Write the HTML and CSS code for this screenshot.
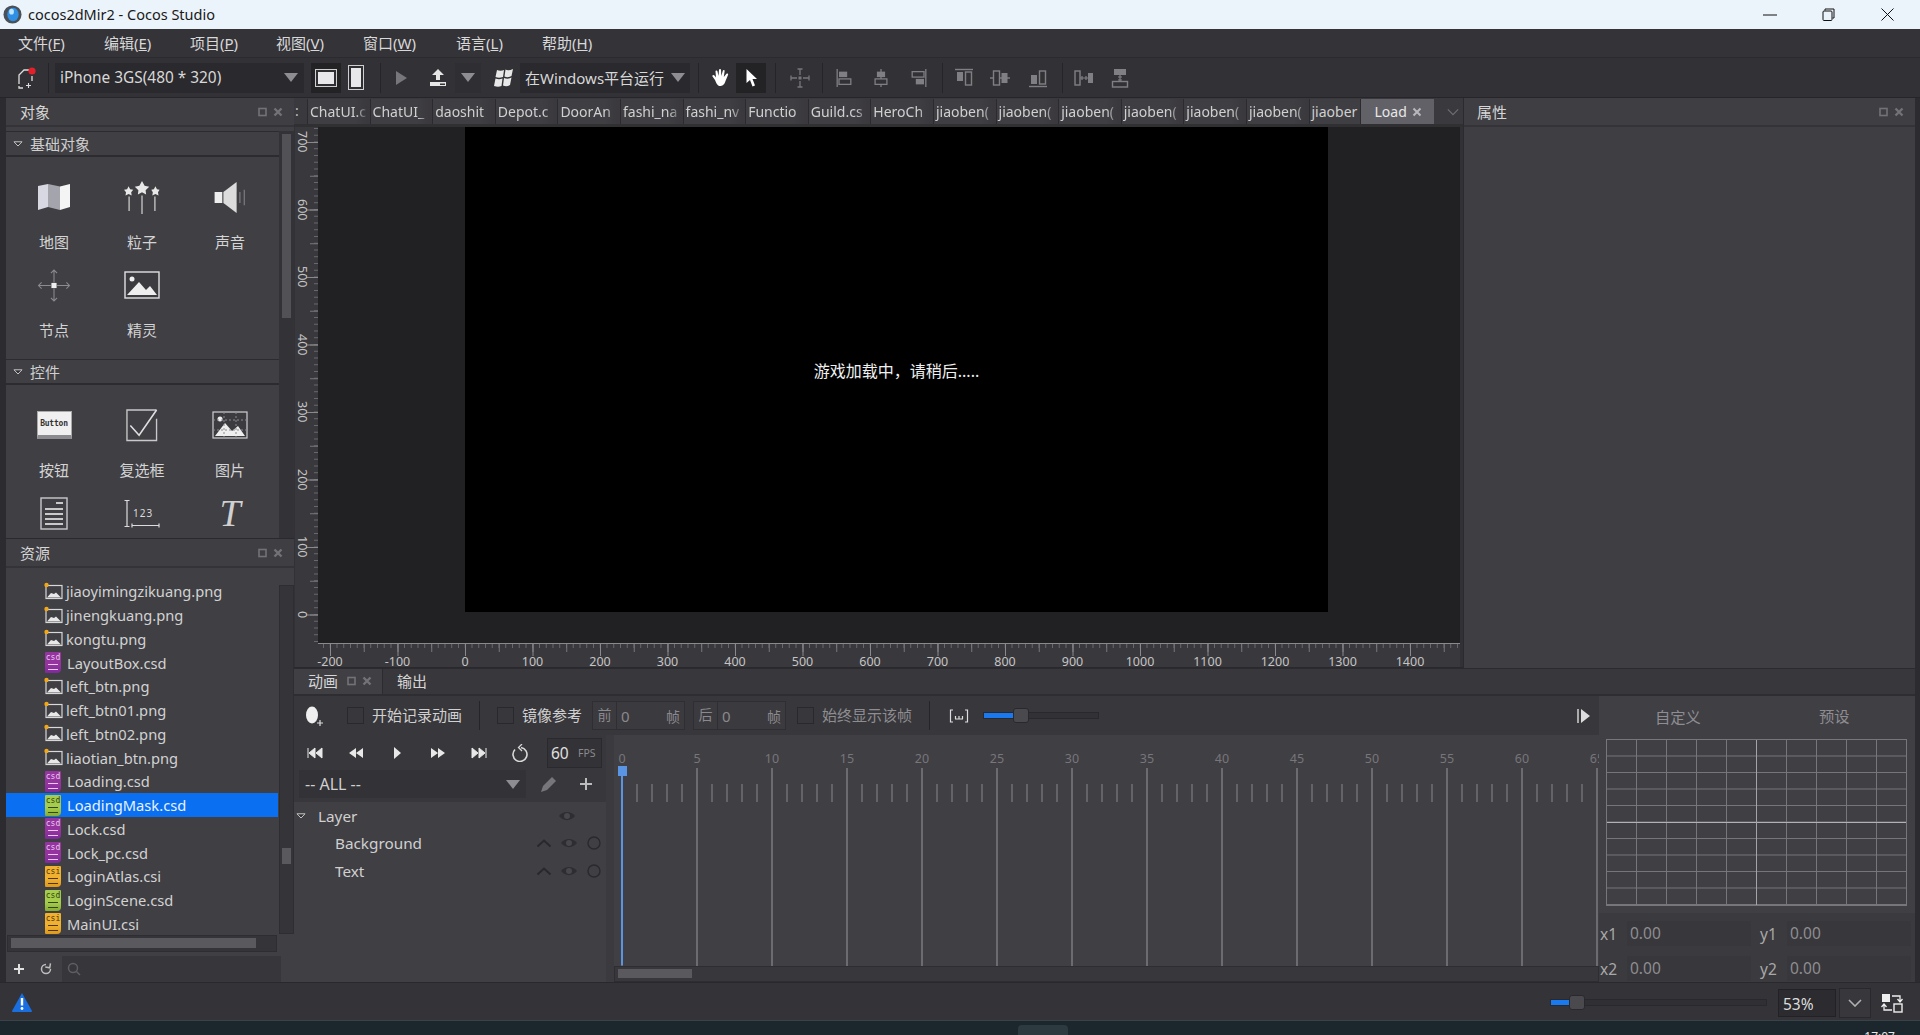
FILE: index.html
```html
<!DOCTYPE html>
<html lang="zh-CN">
<head>
<meta charset="utf-8">
<title>cocos2dMir2 - Cocos Studio</title>
<link rel="stylesheet" href="styles.css">
</head>
<body>
<svg class="defs" aria-hidden="true">
  <symbol id="png" viewBox="0 0 19 19">
    <rect x="2" y="3.5" width="16" height="13" fill="none" stroke="#d8d8d8" stroke-width="1.2"/>
    <path d="M3 15.5 L7 11 L10 12 L12 10.5 L17 15.5Z" fill="#e8e8e8"/>
    <circle cx="2.5" cy="3" r="2.2" fill="#f0a818"/>
  </symbol>
  <symbol id="pinmax" viewBox="0 0 10 10"><rect x="1" y="1.5" width="7" height="7" fill="none" stroke="#737276" stroke-width="1.6"/></symbol>
  <symbol id="pinx" viewBox="0 0 10 10"><path d="M1.5 1.5 L8.5 8.5 M8.5 1.5 L1.5 8.5" stroke="#737276" stroke-width="2.4"/></symbol>
  <symbol id="tri" viewBox="0 0 10 6"><path d="M1 .8 H9 L5 5Z" fill="#2f2e32" stroke="#c8c8c8" stroke-width="1"/></symbol>
  <symbol id="eye" viewBox="0 0 18 12"><path d="M1 6 C5 .5 13 .5 17 6 C13 11.5 5 11.5 1 6Z" fill="#2e2d31"/><circle cx="9" cy="6" r="3" fill="#48474b"/></symbol>
  <symbol id="up" viewBox="0 0 16 10"><path d="M1.5 8.5 L8 2.5 L14.5 8.5" fill="none" stroke="#29282c" stroke-width="2"/></symbol>
  <symbol id="ring" viewBox="0 0 14 14"><circle cx="7" cy="7" r="6" fill="none" stroke="#2a292d" stroke-width="1.4"/></symbol>
</svg>

<div class="app">
  <header class="titlebar">
    <svg class="appicon" viewBox="0 0 20 20"><circle cx="10" cy="10" r="9.500" fill="#4a5058"/><ellipse cx="10.500" cy="10" rx="6" ry="7" fill="#2f8fe4"/><ellipse cx="9" cy="7" rx="2.500" ry="3" fill="#bfe4fb"/></svg>
    <span class="apptitle">cocos2dMir2 - Cocos Studio</span>
    <div class="winctl">
      <svg class="wc-min" viewBox="0 0 14 2"><path d="M0 1H14" stroke="#111" stroke-width="1"/></svg>
      <svg class="wc-res" viewBox="0 0 13 13"><path d="M3 2.5 V1 H12 V10 H10.5" fill="none" stroke="#111"/><rect x="1" y="3" width="9" height="9.5" rx="1" fill="none" stroke="#111"/></svg>
      <svg class="wc-cls" viewBox="0 0 13 13"><path d="M.5 .5 L12.5 12.5 M12.5 .5 L.5 12.5" stroke="#111"/></svg>
    </div>
  </header>

  <nav class="menubar">
    <span class="menu">文件(<u>F</u>)</span>
    <span class="menu">编辑(<u>E</u>)</span>
    <span class="menu">项目(<u>P</u>)</span>
    <span class="menu">视图(<u>V</u>)</span>
    <span class="menu menu-w">窗口(<u>W</u>)</span>
    <span class="menu">语言(<u>L</u>)</span>
    <span class="menu">帮助(<u>H</u>)</span>
  </nav>

  <div class="toolbar">
    <span class="tb ml-12"><svg class="newdoc" viewBox="0 0 18 22"><path d="M11 3 H6 L1 8 V17 M1 19 V21 H5 M14 9 V14" fill="none" stroke="#ddd" stroke-width="1.300"/><path d="M8 18.500 H13 M10.500 16 V21" stroke="#ddd" stroke-width="1.100"/><circle cx="14" cy="4" r="3.600" fill="#e2202c"/></svg></span>
    <span class="sep ml-6"></span>
    <div class="combo combo-device ml-6"><span class="combo-text">iPhone 3GS(480 * 320)</span><span class="arrow"></span></div>
    <span class="tb active ml-7"><span class="screen-land"></span></span>
    <span class="tb"><span class="screen-port"></span></span>
    <span class="sep ml-9"></span>
    <span class="tb ml-5"><svg class="i20" viewBox="0 0 20 20"><path d="M5 3 L16 10 L5 17Z" fill="#77767a"/></svg></span>
    <span class="tb ml-7"><svg class="i20" viewBox="0 0 20 20"><path d="M10 1 L16 7 H12 V12 H8 V7 H4Z M2 14 H18 V18 H2Z" fill="#e6e6e6"/><rect x="12" y="15.5" width="5" height="1.5" fill="#333"/></svg></span>
    <span class="tb tb-arrow ml-2"><span class="arrow"></span></span>
    <svg class="winlogo ml-12" viewBox="0 0 22 22"><path d="M4 3 C6 4 9 4 11 3 L10 10 C7 11 5 11 2.500 10Z M12.500 2.500 C14 3.500 17 3.500 20 2 L18.500 9 C16 10.500 13.500 10.500 11.500 9.500Z M2.500 11.500 C5 12.500 7 12.500 9.500 11.500 L8.500 19 C6 20 4 20 1 19Z M11 11 C13.500 12 16 12 18.500 10.500 L17 18 C14.500 19.500 12.500 19.500 10 18.500Z" fill="#e8e8e8"/></svg>
    <div class="combo combo-run ml-5"><span class="combo-text">在Windows平台运行</span><span class="arrow"></span></div>
    <span class="sep ml-8"></span>
    <span class="tb ml-7"><svg class="i20" viewBox="0 0 20 20"><path d="M4 12 L1.500 8.500 C1 7 2.500 6.500 3.500 7.500 L5 9.500 L4.500 3.500 C4.500 2.200 6.300 2.200 6.500 3.500 L7.500 8 L8 1.800 C8.200 .6 10 .6 10 1.800 L10.300 8 L11.800 2.800 C12.200 1.600 13.900 2 13.600 3.300 L12.800 9 L15.500 5.800 C16.500 5 17.600 5.900 17 7 L14.500 13 C13.500 17 11 18 9 18 C6.500 18 5.500 15.500 4 12Z" fill="#fff"/></svg></span>
    <span class="tb active"><svg class="i20" viewBox="0 0 20 20"><path d="M5.500 1 L16 11 H11.500 L14 17.500 L11.500 18.500 L9 12 L5.500 15Z" fill="#fff"/></svg></span>
    <span class="sep ml-9"></span>
    <span class="tb ml-9"><svg class="i20" viewBox="0 0 20 20"><g fill="none" stroke="#77767a" stroke-width="1.300"><path d="M10 1 V7 M7.500 1 H12.500 M10 13 V19 M7.500 19 H12.500 M1 10 H7 M1 7.500 V12.500 M13 10 H19 M19 7.500 V12.500"/></g><rect x="8.500" y="8.500" width="3" height="3" fill="#77767a"/></svg></span>
    <span class="sep ml-7"></span>
    <span class="tb ml-6"><svg class="i20" viewBox="0 0 18 22"><path d="M1.500 1 V21" stroke="#808084" stroke-width="1.400"/><rect x="3.500" y="4" width="9" height="6" fill="#808084"/><rect x="3.500" y="12" width="13" height="6" fill="none" stroke="#808084" stroke-width="1.400"/></svg></span>
    <span class="tb ml-7"><svg class="i20" viewBox="0 0 18 22"><path d="M9 1 V21" stroke="#808084" stroke-width="1.400"/><rect x="4.500" y="4" width="9" height="6" fill="#808084"/><rect x="2.500" y="12" width="13" height="6" fill="#323135" stroke="#808084" stroke-width="1.400"/></svg></span>
    <span class="tb ml-8"><svg class="i20" viewBox="0 0 18 22"><path d="M16.500 1 V21" stroke="#808084" stroke-width="1.400"/><rect x="1.500" y="4" width="13" height="6" fill="none" stroke="#808084" stroke-width="1.400"/><rect x="5.500" y="12" width="9" height="6" fill="#808084"/></svg></span>
    <span class="sep ml-8"></span>
    <span class="tb ml-6"><svg class="i20" viewBox="0 0 20 20"><path d="M1 1.500 H19" stroke="#808084" stroke-width="1.400"/><rect x="3" y="4" width="6" height="9" fill="#808084"/><rect x="11.500" y="4" width="6" height="13" fill="none" stroke="#808084" stroke-width="1.400"/></svg></span>
    <span class="tb ml-6"><svg class="i20" viewBox="0 0 20 20"><path d="M0 10 H20" stroke="#808084" stroke-width="1.400"/><rect x="3.500" y="3" width="6" height="14" fill="#323135" stroke="#808084" stroke-width="1.400"/><rect x="11.500" y="5" width="6" height="10" fill="#808084"/></svg></span>
    <span class="tb ml-8"><svg class="i20" viewBox="0 0 20 20"><path d="M1 18.500 H19" stroke="#808084" stroke-width="1.400"/><rect x="3" y="7" width="6" height="9" fill="#808084"/><rect x="11.500" y="3" width="6" height="13" fill="none" stroke="#808084" stroke-width="1.400"/></svg></span>
    <span class="sep ml-9"></span>
    <span class="tb ml-6"><svg class="i20" viewBox="0 0 20 20"><rect x="1" y="3" width="5" height="14" fill="none" stroke="#808084" stroke-width="1.400"/><path d="M6 10 H14 M8 8 V12 M12 8 V12" stroke="#808084" stroke-width="1.200"/><rect x="14" y="5" width="5" height="10" fill="#808084"/></svg></span>
    <span class="tb ml-6"><svg class="i20" viewBox="0 0 20 20"><rect x="4" y="1" width="12" height="6" fill="#808084"/><path d="M10 7 V13 M8 9 H12 M8 12 H12" stroke="#808084" stroke-width="1.200"/><rect x="2.500" y="13.500" width="15" height="5.500" fill="none" stroke="#808084" stroke-width="1.400"/></svg></span>
  </div>

  <main class="workspace">
    <aside class="leftcol">
      <section class="panel objects">
        <div class="phead"><span>对象</span><span class="pins"><svg><use href="#pinmax"/></svg><svg><use href="#pinx"/></svg></span></div>
        <div class="obj-body">
          <div class="obj-list">
            <div class="sec-head first"><svg class="tri"><use href="#tri"/></svg>基础对象</div>
            <div class="obj-grid">
              <div class="cell">
                <svg class="obj-ic" viewBox="0 0 34 28"><path d="M1 3 L11 1 V24 L1 27Z" fill="#d8d8e2"/><path d="M11 1 L23 3.500 V27 L11 24Z" fill="#a4a4ac"/><path d="M23 3.500 L33 1 V24 L23 27Z" fill="#f4f4f4"/></svg>
                <span>地图</span>
              </div>
              <div class="cell">
                <svg class="obj-ic tall" viewBox="0 0 34 32"><g fill="#e8e8e8"><path d="M17 0 L19.500 4.500 L24 5.500 L20.500 9 L21 13 L17 11 L13 13 L13.500 9 L10 5.500 L14.500 4.500Z"/><path d="M4 5 L5.500 8 L8.500 8.500 L6.500 10.800 L7 14 L4 12.500 L1 14 L1.500 10.800 L-.5 8.500 L2.500 8Z"/><path d="M30 5 L31.500 8 L34 8.500 L32.500 10.800 L33 14 L30 12.500 L27 14 L27.500 10.800 L26 8.500 L28.500 8Z"/></g><path d="M17 14 V32 M4.500 15 V29 M29.500 15 V29" stroke="#bbb" stroke-width="1.400"/></svg>
                <span>粒子</span>
              </div>
              <div class="cell">
                <svg class="obj-ic tall" viewBox="0 0 30 30"><rect x="1" y="10" width="7" height="10" fill="#eee"/><path d="M9 10 L21 1 V29 L9 20Z" fill="#dcdcdc"/><path d="M24 10 V20 M28 8 V22" stroke="#77767a" stroke-width="1.200"/></svg>
                <span>声音</span>
              </div>
              <div class="cell">
                <svg class="obj-ic tall" viewBox="0 0 32 32"><g fill="none" stroke="#8c8b90" stroke-width="1"><path d="M16 1 V13 M16 19 V31 M1 16 H13 M19 16 H31 M13 4 L16 1 L19 4 M13 28 L16 31 L19 28 M4 13 L1 16 L4 19 M28 13 L31 16 L28 19"/></g><rect x="13.500" y="13.500" width="5" height="5" fill="#eee"/></svg>
                <span>节点</span>
              </div>
              <div class="cell">
                <svg class="obj-ic" viewBox="0 0 36 28"><rect x="1" y="1" width="34" height="26" fill="#3c3b40" stroke="#e0e0e0" stroke-width="1.400"/><circle cx="8" cy="8" r="2.500" fill="#eee"/><path d="M3 24 L15 11 L22 19 L26 15 L33 24Z" fill="#eee"/></svg>
                <span>精灵</span>
              </div>
            </div>
            <div class="sec-head"><svg class="tri"><use href="#tri"/></svg>控件</div>
            <div class="obj-grid">
              <div class="cell">
                <div class="btn-ic">Button</div>
                <span>按钮</span>
              </div>
              <div class="cell">
                <svg class="obj-ic tall" viewBox="0 0 34 34"><path d="M32 1 H1.500 V32.500 H32 V10" fill="none" stroke="#c9c9c9" stroke-width="1.400"/><path d="M5 17 L14 27 L32 1" fill="none" stroke="#e0e0e0" stroke-width="1.600"/></svg>
                <span>复选框</span>
              </div>
              <div class="cell">
                <svg class="obj-ic" viewBox="0 0 36 28"><rect x="1" y="1" width="34" height="26" fill="#3c3b40" stroke="#d0d0d0" stroke-width="1.200"/><circle cx="8" cy="8" r="2.500" fill="#eee"/><path d="M3 25 L13 12 L20 20 L26 15 L33 25Z" fill="#eee"/><path d="M12 1 V27 M24 1 V27 M1 9 H35 M1 19 H35" stroke="#8c8b90" stroke-dasharray="2 2"/></svg>
                <span>图片</span>
              </div>
              <div class="cell">
                <svg class="obj-ic tall" viewBox="0 0 28 33"><rect x="1" y="1" width="26" height="31" fill="none" stroke="#c9c9c9" stroke-width="1.400"/><path d="M16 6 H23 M5 12 H23 M5 17 H23 M5 22 H23 M5 27 H23" stroke="#c9c9c9" stroke-width="1.800"/></svg>
              </div>
              <div class="cell">
                <svg class="obj-ic tall" viewBox="0 0 36 30"><path d="M3 2 V28 M.5 2 H5.500 M.5 28 H5.500 M8 27 H35 M8 25 V29 M35 25 V29" stroke="#dcdcdc" stroke-width="1.200" fill="none"/><text x="9" y="18" class="num-text">123</text></svg>
              </div>
              <div class="cell">
                <div class="t-ic">T</div>
              </div>
            </div>
          </div>
          <div class="vscroll"><span class="vthumb"></span></div>
        </div>
      </section>

      <section class="panel resources">
        <div class="phead"><span>资源</span><span class="pins"><svg><use href="#pinmax"/></svg><svg><use href="#pinx"/></svg></span></div>
        <div class="res-body">
          <ul class="files">
            <li><svg class="fi"><use href="#png"/></svg>jiaoyimingzikuang.png</li>
            <li><svg class="fi"><use href="#png"/></svg>jinengkuang.png</li>
            <li><svg class="fi"><use href="#png"/></svg>kongtu.png</li>
            <li><span class="doc purple">csd</span>LayoutBox.csd</li>
            <li><svg class="fi"><use href="#png"/></svg>left_btn.png</li>
            <li><svg class="fi"><use href="#png"/></svg>left_btn01.png</li>
            <li><svg class="fi"><use href="#png"/></svg>left_btn02.png</li>
            <li><svg class="fi"><use href="#png"/></svg>liaotian_btn.png</li>
            <li><span class="doc purple">csd</span>Loading.csd</li>
            <li class="sel"><span class="doc green">csd</span>LoadingMask.csd</li>
            <li><span class="doc purple">csd</span>Lock.csd</li>
            <li><span class="doc purple">csd</span>Lock_pc.csd</li>
            <li><span class="doc orange">csi</span>LoginAtlas.csi</li>
            <li><span class="doc green">csd</span>LoginScene.csd</li>
            <li><span class="doc orange">csi</span>MainUI.csi</li>
          </ul>
          <div class="res-vscroll"><span class="res-vthumb"></span></div>
        </div>
        <div class="hscroll"><span class="hthumb"></span></div>
        <div class="res-tools">
          <svg class="plus" viewBox="0 0 12 12"><path d="M6 1 V11 M1 6 H11" stroke="#e0e0e0" stroke-width="2"/></svg>
          <svg class="refresh" viewBox="0 0 12 12"><path d="M10.500 6 A4.500 4.500 0 1 1 6 1.500" fill="none" stroke="#bdbdbd" stroke-width="1.500"/><path d="M10 0 V4.500 H5.500" fill="none" stroke="#bdbdbd" stroke-width="1.500" transform="rotate(10 8 3)"/></svg>
          <div class="search"><svg viewBox="0 0 14 14"><circle cx="6" cy="6" r="4.500" fill="none" stroke="#5f5e62" stroke-width="1.500"/><path d="M9.500 9.500 L13 13" stroke="#5f5e62" stroke-width="1.500"/></svg></div>
        </div>
      </section>
    </aside>

    <div class="maincol">
      <div class="upper">
        <div class="center">
          <div class="doctabs">
            <span class="more">:</span>
            <span class="tab">ChatUI.c</span>
            <span class="tab">ChatUI_</span>
            <span class="tab">daoshit</span>
            <span class="tab">Depot.c</span>
            <span class="tab">DoorAn</span>
            <span class="tab">fashi_na</span>
            <span class="tab">fashi_nv</span>
            <span class="tab">Functio</span>
            <span class="tab">Guild.cs</span>
            <span class="tab">HeroCh</span>
            <span class="tab">jiaoben(</span>
            <span class="tab">jiaoben(</span>
            <span class="tab">jiaoben(</span>
            <span class="tab">jiaoben(</span>
            <span class="tab">jiaoben(</span>
            <span class="tab">jiaoben(</span>
            <span class="tab tab-short">jiaober</span>
            <span class="tab tab-on"><span class="tab-label">Load</span><svg class="tab-x" viewBox="0 0 10 10"><path d="M1.500 1.500 L8.500 8.500 M8.500 1.500 L1.500 8.500" stroke="#b8b8bc" stroke-width="2"/></svg></span>
            <svg class="chev" viewBox="0 0 14 8"><path d="M1 1 L7 7 L13 1" fill="none" stroke="#6e6d71" stroke-width="1.400"/></svg>
          </div>
          <div class="stage">
            <div class="stage-top">
              <div class="vruler">
                <span>700</span><span>600</span><span>500</span><span>400</span><span>300</span><span>200</span><span>100</span><span>0</span>
              </div>
              <div class="canvas">
                <div class="gamescreen">游戏加载中，请稍后.....</div>
              </div>
            </div>
            <div class="hruler">
              <div class="hticks"></div>
              <div class="hlabels">
                <span>-200</span><span>-100</span><span>0</span><span>100</span><span>200</span><span>300</span><span>400</span><span>500</span><span>600</span><span>700</span><span>800</span><span>900</span><span>1000</span><span>1100</span><span>1200</span><span>1300</span><span>1400</span>
              </div>
            </div>
          </div>
        </div>
        <section class="props">
          <div class="phead"><span>属性</span><span class="pins"><svg><use href="#pinmax"/></svg><svg><use href="#pinx"/></svg></span></div>
        </section>
      </div>

      <section class="anim">
        <div class="anim-tabs">
          <div class="atab on"><span>动画</span><span class="pins"><svg><use href="#pinmax"/></svg><svg><use href="#pinx"/></svg></span></div>
          <div class="atab"><span>输出</span></div>
        </div>
        <div class="anim-main">
          <div class="anim-left">
            <div class="anim-bar">
              <svg class="addkey" viewBox="0 0 18 20"><ellipse cx="7" cy="9" rx="6" ry="8.500" fill="#efefef"/><path d="M15 14 V20 M12 17 H18" stroke="#ddd" stroke-width="1.200"/></svg>
              <span class="chk ml-24"></span>
              <span class="lbl lbl-91">开始记录动画</span>
              <span class="sep2 ml-17"></span>
              <span class="chk ml-17"></span>
              <span class="lbl lbl-60">镜像参考</span>
              <div class="framebox ml-11"><span class="fb-a">前</span><span class="fb-b">0</span><span class="fb-c">帧</span></div>
              <div class="framebox ml-8"><span class="fb-a">后</span><span class="fb-b">0</span><span class="fb-c">帧</span></div>
              <span class="chk ml-11"></span>
              <span class="lbl lbl-91 dim">始终显示该帧</span>
              <span class="sep2 ml-17"></span>
              <svg class="bracket" viewBox="0 0 20 14"><path d="M4 1 H1.500 V13 H4 M16 1 H18.500 V13 H16 M6 10 H14 M6.500 7 V10 M10 7 V10 M13.500 7 V10" fill="none" stroke="#ddd" stroke-width="1.200"/></svg>
              <div class="slider slider-anim"><span class="fill"></span><span class="knob"></span></div>
              <svg class="playfrom" viewBox="0 0 14 16"><path d="M1 1 V15" stroke="#ddd" stroke-width="1.400"/><path d="M4 1 L13 8 L4 15Z" fill="#ddd"/></svg>
            </div>
            <div class="anim-split">
              <div class="layers">
                <div class="transport">
                  <span class="tp"><svg viewBox="0 0 16 12"><path d="M1 1 V11 M8 1 L2 6 L8 11Z M15 1 L9 6 L15 11Z" fill="#e8e8e8" stroke="#e8e8e8"/></svg></span>
                  <span class="tp"><svg viewBox="0 0 16 12"><path d="M8 1 L1 6 L8 11Z M15 1 L8 6 L15 11Z" fill="#e8e8e8"/></svg></span>
                  <span class="tp"><svg viewBox="0 0 16 12"><path d="M5 0 L12 6 L5 12Z" fill="#e8e8e8"/></svg></span>
                  <span class="tp"><svg viewBox="0 0 16 12"><path d="M1 1 L8 6 L1 11Z M8 1 L15 6 L8 11Z" fill="#e8e8e8"/></svg></span>
                  <span class="tp"><svg viewBox="0 0 16 12"><path d="M15 1 V11 M1 1 L7 6 L1 11Z M8 1 L14 6 L8 11Z" fill="#e8e8e8" stroke="#e8e8e8"/></svg></span>
                  <span class="tp"><svg class="loop" viewBox="0 0 18 18"><path d="M10 3.500 A7 7 0 1 1 4 5.500" fill="none" stroke="#d8d8d8" stroke-width="1.600"/><path d="M11 0 L7.500 3.500 L11 7" fill="none" stroke="#d8d8d8" stroke-width="1.300"/></svg></span>
                  <div class="fps"><span class="fps-n">60</span><span class="fps-u">FPS</span></div>
                </div>
                <div class="all-row">
                  <div class="allcombo"><span>-- ALL --</span><span class="arrow"></span></div>
                  <svg class="pencil" viewBox="0 0 18 18"><path d="M1 17 L3 11 L12 2 L16 6 L7 15Z" fill="#77767a"/></svg>
                  <svg class="addanim" viewBox="0 0 14 14"><path d="M7 1 V13 M1 7 H13" stroke="#bcbcbc" stroke-width="2"/></svg>
                </div>
                <ul class="tree">
                  <li class="t-layer"><svg class="tri"><use href="#tri"/></svg><span class="t-name">Layer</span><svg class="eye"><use href="#eye"/></svg></li>
                  <li class="t-child"><span class="t-name">Background</span><svg class="upc"><use href="#up"/></svg><svg class="eye"><use href="#eye"/></svg><svg class="ring"><use href="#ring"/></svg></li>
                  <li class="t-child"><span class="t-name">Text</span><svg class="upc"><use href="#up"/></svg><svg class="eye"><use href="#eye"/></svg><svg class="ring"><use href="#ring"/></svg></li>
                </ul>
              </div>
              <div class="splitter"></div>
              <div class="timeline">
                <div class="frames">
                  <span>0</span><span>5</span><span>10</span><span>15</span><span>20</span><span>25</span><span>30</span><span>35</span><span>40</span><span>45</span><span>50</span><span>55</span><span>60</span><span>65</span>
                </div>
                <div class="tracks"></div>
                <span class="playhead"></span>
                <div class="tl-scroll"><span class="tl-thumb"></span></div>
              </div>
            </div>
          </div>
          <aside class="curve">
            <div class="curve-tabs"><span class="ct-a">自定义</span><span class="ct-b">预设</span></div>
            <div class="curve-grid"></div>
            <div class="curve-vals">
              <div class="cv-row"><span class="cv-l">x1</span><span class="cv-i">0.00</span><span class="cv-l cv-l2">y1</span><span class="cv-i">0.00</span></div>
              <div class="cv-row"><span class="cv-l">x2</span><span class="cv-i">0.00</span><span class="cv-l cv-l2">y2</span><span class="cv-i">0.00</span></div>
            </div>
          </aside>
        </div>
      </section>
    </div>
  </main>

  <footer class="status">
    <svg class="warn" viewBox="0 0 20 19"><path d="M10 0 L20 18 Q20 19 19 19 H1 Q0 19 0 18Z" fill="#1a6fe0"/><path d="M10 5 V12.500" stroke="#fff" stroke-width="2.400"/><circle cx="10" cy="15.500" r="1.400" fill="#fff"/></svg>
    <div class="slider slider-zoom"><span class="fill"></span><span class="knob"></span></div>
    <div class="pct">53%</div>
    <div class="pct-drop"><svg viewBox="0 0 14 8"><path d="M1 1 L7 7 L13 1" fill="none" stroke="#b0b0b0" stroke-width="1.600"/></svg></div>
    <svg class="swap" viewBox="0 0 22 20"><rect x="1" y="1" width="8" height="8" fill="#eee"/><path d="M11 3 H19 V8 M16.500 6 L19 9 L21.500 6" fill="none" stroke="#eee" stroke-width="1.300"/><rect x="13" y="11" width="8" height="8" fill="none" stroke="#eee" stroke-width="1.400"/><path d="M11 17 H3 V12 M.5 14 L3 11 L5.500 14" fill="none" stroke="#eee" stroke-width="1.300"/></svg>
  </footer>

  <div class="taskbar"><span class="pill"></span><span class="clock">17:07</span></div>
</div>
</body>
</html>
```

FILE: styles.css
```css
* { box-sizing: border-box; }
html, body { margin: 0; padding: 0; }
body {
  width: 1920px;
  height: 1035px;
  overflow: hidden;
  background: #2a292d;
  color: #d6d6d6;
  font-family: "Noto Sans", "Noto Sans CJK SC", sans-serif;
  font-size: 14px;
}
ul { list-style: none; margin: 0; padding: 0; }
.defs { position: absolute; width: 0; height: 0; }
.app { width: 1920px; height: 1035px; display: flex; flex-direction: column; }

.ml-2 { margin-left: 2px; } .ml-5 { margin-left: 5px; } .ml-6 { margin-left: 6px; }
.ml-7 { margin-left: 7px; } .ml-8 { margin-left: 8px; } .ml-9 { margin-left: 9px; }
.ml-11 { margin-left: 11px; } .ml-12 { margin-left: 12px; } .ml-17 { margin-left: 17px; }
.ml-24 { margin-left: 24px; }

/* title bar */
.titlebar { height: 29px; flex: none; background: #ebf3fb; display: flex; align-items: center; padding-left: 3px; color: #1a1a1a; }
.appicon { width: 19px; height: 19px; flex: none; }
.apptitle { margin-left: 6px; font-size: 14.500px; line-height: 29px; }
.winctl { margin-left: auto; display: flex; align-items: center; height: 29px; }
.wc-min { width: 14px; height: 2px; margin-right: 45px; }
.wc-res { width: 13px; height: 13px; margin-right: 46px; }
.wc-cls { width: 13px; height: 13px; margin-right: 26px; }

/* menu */
.menubar { height: 29px; flex: none; background: #343338; border-bottom: 1px solid #2b2a2e; display: flex; align-items: center; padding: 0 0 2px 18px; }
.menu { width: 86px; flex: none; font-size: 15px; color: #d8d8d8; white-space: nowrap; }
.menu-w { width: 93px; margin-left: 1px; }

/* toolbar */
.toolbar { height: 40px; flex: none; background: #323135; border-bottom: 1px solid #262529; display: flex; align-items: center; }
.tb { width: 30px; height: 30px; flex: none; display: flex; align-items: center; justify-content: center; }
.tb.active { background: #232326; }
.tb-arrow { width: 26px; background: #2f2e32; }
.i20 { width: 20px; height: 20px; }
.newdoc { width: 18px; height: 22px; }
.sep { width: 1px; height: 30px; flex: none; background: #252428; }
.combo { height: 30px; flex: none; background: #2a292d; display: flex; align-items: center; justify-content: space-between; }
.combo-text { font-size: 15.400px; line-height: 20px; color: #d8d8d8; white-space: nowrap; }
.combo-device { width: 249px; padding: 0 6px 0 5px; }
.combo-run { width: 170px; padding: 0 5px 0 5px; }
.combo-run .combo-text { font-size: 15px; }
.arrow { width: 0; height: 0; border-left: 7px solid transparent; border-right: 7px solid transparent; border-top: 9px solid #8e8d91; flex: none; }
.screen-land { width: 20px; height: 16px; background: #e8e8ea; border: 2px solid #2f2e32; outline: 1px solid #cfcfcf; }
.screen-port { width: 14px; height: 23px; background: #e8e8ea; border: 2px solid #2f2e32; outline: 1px solid #cfcfcf; }
.winlogo { width: 22px; height: 22px; flex: none; }

/* workspace */
.workspace { flex: none; height: 884px; display: flex; padding: 0 5px 0 6px; background: #2c2b2f; }
.leftcol { width: 288px; flex: none; display: flex; flex-direction: column; }
.maincol { width: 1621px; flex: none; display: flex; flex-direction: column; }
.panel { display: flex; flex-direction: column; background: #403f44; }
.objects { height: 441px; flex: none; overflow: hidden; border-bottom: 1px solid #2a292d; }
.resources { height: 443px; flex: none; }

.phead { height: 29px; flex: none; display: flex; align-items: center; justify-content: space-between; background: #3f3e43; border-bottom: 2px solid #343337; padding: 0 11px 0 14px; font-size: 15px; line-height: 20px; color: #d6d6d6; }
.pins { display: flex; gap: 5px; align-items: center; }
.pins svg { width: 10px; height: 10px; }

.obj-body { flex: 1; min-height: 0; display: flex; }
.obj-list { width: 273px; flex: none; padding-top: 4px; overflow: hidden; }
.sec-head { height: 26px; display: flex; align-items: center; background: #403f44; border-top: 1px solid #2c2b2f; border-bottom: 2px solid #2c2b2f; font-size: 15px; padding-left: 7px; color: #cfcfcf; }
.tri { width: 10px; height: 6px; margin-right: 7px; flex: none; }
.obj-grid { display: grid; grid-template-columns: repeat(3, 88px); grid-auto-rows: 88px; padding: 14px 0 12px 4px; }
.cell { display: flex; flex-direction: column; align-items: center; padding-top: 12px; font-size: 15px; color: #d4d4d4; }
.cell > span { margin-top: 21px; line-height: 20px; }
.obj-ic { height: 28px; width: 36px; flex: none; }
.obj-ic.tall { height: 33px; margin: -2.500px 0; }
.btn-ic { width: 35px; height: 28px; flex: none; background: #f0f0f0; border: 1px solid #aaa; border-bottom: 4px solid #8c8b90; font-family: "DejaVu Sans Mono", monospace; font-size: 8px; font-weight: bold; color: #333; display: flex; align-items: center; justify-content: center; letter-spacing: -.2px; }
.t-ic { height: 28px; flex: none; font-family: "Liberation Serif", serif; font-style: italic; font-size: 38px; line-height: 28px; color: #d0d0d0; }
.num-text { font-family: "Noto Sans", sans-serif; font-size: 10px; fill: #dcdcdc; letter-spacing: 1px; }
.vscroll { width: 15px; flex: none; background: #333236; padding: 3px 3px 0; margin-top: 4px; }
.vthumb { display: block; height: 184px; background: #525156; }

.res-body { flex: 1; min-height: 0; display: flex; }
.files { width: 272px; flex: none; padding-top: 11.500px; overflow: hidden; }
.files li { height: 23.750px; display: flex; align-items: center; padding-left: 38px; font-size: 14.700px; line-height: 20px; color: #d2d2d2; white-space: nowrap; }
.files li.sel { background: #0a6ff0; color: #e8f2ff; }
.fi { width: 19px; height: 19px; flex: none; margin-right: 3px; margin-left: 0; }
.doc { position: relative; width: 16px; height: 21px; flex: none; margin: 0 6px 0 1px; font-family: "DejaVu Sans Mono", monospace; font-size: 8px; line-height: 11px; text-align: center; border-radius: 1px 1px 4px 1px; }
.doc::after { content: ""; position: absolute; left: 3px; right: 3px; top: 12px; height: 4px; border-top: 1px solid currentColor; border-bottom: 1px solid currentColor; }
.doc.purple { background: linear-gradient(#96349f 60%, #7e2a9c); color: #e7c8f0; }
.doc.green { background: linear-gradient(#a5cc4c 60%, #86ad34); color: #33460e; }
.doc.orange { background: linear-gradient(#f0b030 60%, #dd9a1c); color: #51370a; }
.res-vscroll { width: 15px; flex: none; margin: 17px 0 0 1px; background: #353438; border: 1px solid #2e2d31; padding: 262px 2px 0; }
.res-vthumb { display: block; height: 16px; background: #5a595e; }
.hscroll { height: 17px; flex: none; margin: 1px 17px 0 1px; background: #353438; border: 1px solid #2e2d31; padding: 2px 3px; }
.hthumb { display: block; width: 245px; height: 10px; background: #5a595e; }
.res-tools { height: 30px; flex: none; display: flex; align-items: center; padding-top: 4px; }
.plus { width: 12px; height: 12px; margin-left: 7px; }
.refresh { width: 12px; height: 12px; margin-left: 15px; }
.search { width: 219px; height: 26px; margin-left: 10px; background: #37363a; display: flex; align-items: center; padding-left: 5px; }
.search svg { width: 14px; height: 14px; }

/* center */
.upper { height: 570px; flex: none; display: flex; }
.center { width: 1169px; flex: none; display: flex; flex-direction: column; background: #323135; }
.doctabs { height: 29px; flex: none; display: flex; padding-top: 1px; background: #3a393d; border-bottom: 3px solid #303033; font-size: 14px; }
.more { width: 13px; flex: none; padding-left: 1px; line-height: 24px; color: #c0c0c0; }
.tab { width: 62.600px; flex: none; height: 25px; line-height: 25px; padding-left: 2px; border-left: 1px solid #2b2a2e; background: #3f3e43; color: #d0d0d0; overflow: hidden; white-space: nowrap; }
.tab:not(.tab-short):not(.tab-on) { -webkit-mask-image: linear-gradient(90deg, #000 78%, #0003 94%); mask-image: linear-gradient(90deg, #000 78%, #0003 94%); }
.tab-short { width: 51px; }
.tab-on { width: 74px; background: #626167; color: #e8e8e8; display: flex; padding-left: 14px; }
.tab-label { width: 31px; }
.tab-x { width: 10px; height: 10px; margin: 8px 0 0 6px; flex: none; }
.chev { width: 12px; height: 8px; margin: 9px 0 0 13px; flex: none; }

.stage { flex: 1; min-height: 0; display: flex; flex-direction: column; border-bottom: 1px solid #29282c; padding-left: 1px; }
.stage-top { height: 516px; flex: none; display: flex; }
.vruler {
  width: 23px; flex: none; overflow: hidden; background-color: #39383c;
  display: flex; flex-direction: column;
  background-image:
    linear-gradient(#8a898d 1px, transparent 1px),
    linear-gradient(#77767a 1px, transparent 1px),
    linear-gradient(#6a696d 1px, transparent 1px);
  background-repeat: repeat-y;
  background-position: right 0 top 15px, right 0 top 15px, right 0 top 1px;
  background-size: 12px 67.500px, 8px 33.750px, 4px 6.750px;
}
.vruler span { flex: none; height: 67.500px; writing-mode: vertical-rl; text-align: center; font-size: 12.500px; line-height: 12px; width: 14px; margin-left: -1px; color: #c4c4c4; }
.vruler span:first-child { margin-top: -18.750px; }
.canvas { flex: 1; min-width: 0; background: #212123; padding-left: 147px; margin-right: 3px; }
.gamescreen { width: 863px; height: 485px; background: #000; color: #f0f0f0; font-size: 16px; line-height: 20px; display: flex; align-items: center; justify-content: center; padding-top: 3px; }

.hruler { height: 24px; flex: none; margin-right: 3px; background: #39383c; display: flex; flex-direction: column; }
.hticks {
  height: 13px; flex: none; margin-left: 23px;
  background-image:
    linear-gradient(90deg, #8a898d 1px, transparent 1px),
    linear-gradient(90deg, #77767a 1px, transparent 1px),
    linear-gradient(90deg, #6a696d 1px, transparent 1px);
  background-repeat: repeat-x;
  background-position: 12px 0, 12px 0, 5px 0;
  background-size: 67.500px 12px, 33.750px 8px, 6.750px 4px;
  border-top: 1px solid #8a898d;
}
.hlabels { display: flex; padding-left: 1.250px; height: 11px; line-height: 11px; font-size: 12.500px; color: #c4c4c4; }
.hlabels span { width: 67.500px; flex: none; text-align: center; }

.props { width: 452px; flex: none; background: #3f3e43; border-left: 1px solid #2b2a2e; }
.props .phead { padding: 0 11px 0 13px; }

/* animation panel */
.anim { height: 314px; flex: none; display: flex; flex-direction: column; background: #403f44; }
.anim-tabs { height: 28px; flex: none; display: flex; background: #38373b; border-top: 1px solid #2b2a2e; border-bottom: 2px solid #2e2d31; }
.atab { display: flex; align-items: center; font-size: 15px; line-height: 20px; padding: 0 0 2px 14px; gap: 9px; }
.atab.on { width: 89px; background: #403f44; border-right: 1px solid #2c2b2f; }
.anim-main { flex: 1; min-height: 0; display: flex; }
.anim-left { width: 1305px; flex: none; display: flex; flex-direction: column; }
.anim-bar { height: 39px; flex: none; display: flex; align-items: center; padding-left: 11px; background: #38373b; }
.addkey { width: 18px; height: 20px; flex: none; }
.chk { width: 17px; height: 17px; flex: none; border: 1px solid #29282c; background: #38373b; }
.lbl { margin: -2px 0 0 8px; flex: none; font-size: 15px; line-height: 20px; white-space: nowrap; color: #d0d0d0; }
.lbl-91 { width: 90px; }
.lbl-60 { width: 59px; }
.dim { color: #8e8d91; }
.sep2 { width: 1px; height: 29px; flex: none; background: #252428; }
.framebox { width: 93px; height: 29px; flex: none; border: 1px solid #2f2e32; display: flex; align-items: center; font-size: 14px; color: #8a898d; background: #3b3a3e; }
.fb-a { width: 24px; text-align: center; border-right: 1px solid #2f2e32; height: 27px; line-height: 26px; flex: none; }
.fb-b { margin-left: 4px; font-size: 15px; }
.fb-c { margin-left: auto; margin-right: 4px; }
.bracket { width: 20px; height: 14px; margin-left: 19px; flex: none; }
.slider { position: relative; flex: none; }
.slider-anim { width: 116px; height: 7px; margin-left: 14px; background: #323135; border: 1px solid #29282c; }
.slider-zoom { width: 217px; height: 7px; margin-left: auto; background: #302f33; border: 1px solid #29282c; }
.slider .fill { display: block; height: 5px; background: #1a79ee; }
.slider-anim .fill { width: 32px; }
.slider-zoom .fill { width: 21px; }
.slider .knob { position: absolute; top: -5px; width: 16px; height: 15px; border-radius: 3px; background: #4a494e; border: 1px solid #29282c; }
.slider-anim .knob { left: 29px; }
.slider-zoom .knob { left: 18px; }
.playfrom { width: 14px; height: 16px; margin-left: auto; margin-right: 8px; flex: none; }

.anim-split { flex: 1; min-height: 0; display: flex; }
.layers { width: 312px; flex: none; display: flex; flex-direction: column; background: #403f44; }
.transport { height: 35px; flex: none; display: flex; align-items: center; background: #38373b; }
.tp { width: 41px; flex: none; display: flex; justify-content: center; align-items: center; }
.tp svg { width: 16px; height: 12px; }
.tp svg.loop { width: 18px; height: 18px; }
.fps { width: 55px; height: 30px; margin-left: 7px; flex: none; background: #333236; border: 1px solid #2a292d; display: flex; align-items: center; padding-left: 3px; }
.fps-n { font-size: 15.500px; color: #e0e0e0; width: 27px; }
.fps-u { font-size: 10.500px; color: #8a898d; }
.all-row { height: 32px; flex: none; display: flex; padding-left: 5px; background: #38373b; }
.allcombo { width: 227px; height: 28px; flex: none; background: #333236; display: flex; align-items: center; justify-content: space-between; padding: 0 6px; font-size: 16px; color: #d0d0d0; }
.pencil { width: 18px; height: 18px; margin: 5px 0 0 14px; flex: none; }
.addanim { width: 14px; height: 14px; margin: 7px 0 0 21px; flex: none; }
.tree { flex: 1; font-size: 15.300px; color: #d0d0d0; }
.tree li { height: 27.500px; display: flex; align-items: center; }
.t-layer { padding-left: 2px; }
.t-layer .tri { margin-right: 12px; }
.t-layer .t-name { width: 48px; }
.t-layer .eye { margin-left: 192px; }
.t-child { padding-left: 41px; }
.t-child .t-name { width: 201px; }
.upc { width: 16px; height: 10px; flex: none; }
.eye { width: 18px; height: 12px; flex: none; margin-left: 8px; }
.ring { width: 14px; height: 14px; flex: none; margin-left: 9px; }
.splitter { width: 8px; flex: none; background: #3b3a3e; }

.timeline { width: 985px; flex: none; display: flex; flex-direction: column; background: #403f44; position: relative; }
.frames { height: 33px; flex: none; display: flex; margin-left: -29.500px; overflow: hidden; padding-top: 15px; font-size: 12.500px; line-height: 18px; color: #77767a; }
.frames span { width: 75px; flex: none; text-align: center; }
.tracks {
  flex: 1; min-height: 0;
  background-image:
    linear-gradient(90deg, #6c6b6f 2px, transparent 2px),
    linear-gradient(90deg, #646367 2px, transparent 2px);
  background-repeat: repeat-x;
  background-position: 7px 0, 7px 16px;
  background-size: 75px 100%, 15px 18px;
}
.playhead { position: absolute; left: 7px; top: 31px; width: 2px; height: 199px; background: #5a95e4; }
.playhead::before { content: ""; position: absolute; left: -3px; top: 0; width: 9px; height: 10px; background: #5a95e4; }
.tl-scroll { height: 16px; flex: none; background: #38373b; border: 1px solid #2e2d31; padding: 2px 3px; }
.tl-thumb { display: block; width: 74px; height: 9px; background: #5a595e; }

.curve { width: 316px; flex: none; display: flex; flex-direction: column; background: #403f44; }
.curve-tabs { height: 43px; flex: none; display: flex; align-items: center; padding-bottom: 4px; font-size: 15.300px; color: #8e8d91; }
.ct-a { margin-left: 56px; }
.ct-b { margin-left: 118px; margin-top: -1px; }
.curve-grid {
  width: 301px; height: 167px; flex: none; margin-left: 7px;
  border: 1px solid #77767a;
  background-image:
    linear-gradient(90deg, #a4a4a6 1px, transparent 1px),
    linear-gradient(#b2b2b4 1px, transparent 1px),
    linear-gradient(90deg, #77767a 1px, transparent 1px),
    linear-gradient(#77767a 1px, transparent 1px);
  background-repeat: no-repeat, no-repeat, repeat, repeat;
  background-position: 149px 0, 0 82px, 29px 0, 0 15.500px;
  background-size: 1px 100%, 100% 1px, 30px 100%, 100% 16.500px;
}
.curve-vals { flex: 1; margin-top: 7px; background: #3b3a3e; padding-top: 8px; display: flex; flex-direction: column; gap: 10px; overflow: hidden; }
.cv-row { display: flex; flex: none; height: 25px; align-items: center; font-size: 15.500px; color: #a8a8a8; }
.cv-l { width: 28px; flex: none; padding-left: 1px; }
.cv-l2 { width: 27px; margin-left: 9px; padding-left: 0; }
.cv-i { width: 124px; height: 25px; line-height: 25px; flex: none; background: #38373b; padding-left: 3px; color: #8e8d91; }

/* status */
.status { height: 38px; flex: none; display: flex; align-items: center; padding: 2px 0 0 12px; background: #343338; border-top: 1px solid #29282c; }
.warn { width: 20px; height: 19px; flex: none; }
.pct { width: 58px; height: 28px; margin-left: 11px; flex: none; background: #2c2b2f; border: 1px solid #222125; padding-left: 4px; line-height: 28px; font-size: 15.500px; color: #dcdcdc; }
.pct-drop { width: 32px; height: 30px; margin-left: 3px; flex: none; background: #38373b; border: 1px solid #29282c; display: flex; align-items: center; justify-content: center; }
.pct-drop svg { width: 14px; height: 8px; }
.swap { width: 22px; height: 20px; margin: 0 17px 0 10px; flex: none; }

.taskbar { height: 15px; flex: none; display: flex; background: #1b272c; border-top: 1px solid #3a4448; overflow: hidden; }
.pill { width: 50px; height: 12px; margin: 4px 0 0 1018px; background: #2d3a3f; border-radius: 4px 4px 0 0; }
.clock { margin-left: auto; margin-right: 25px; padding-top: 8px; font-size: 12px; line-height: 16px; color: #e8e8e8; }
```
